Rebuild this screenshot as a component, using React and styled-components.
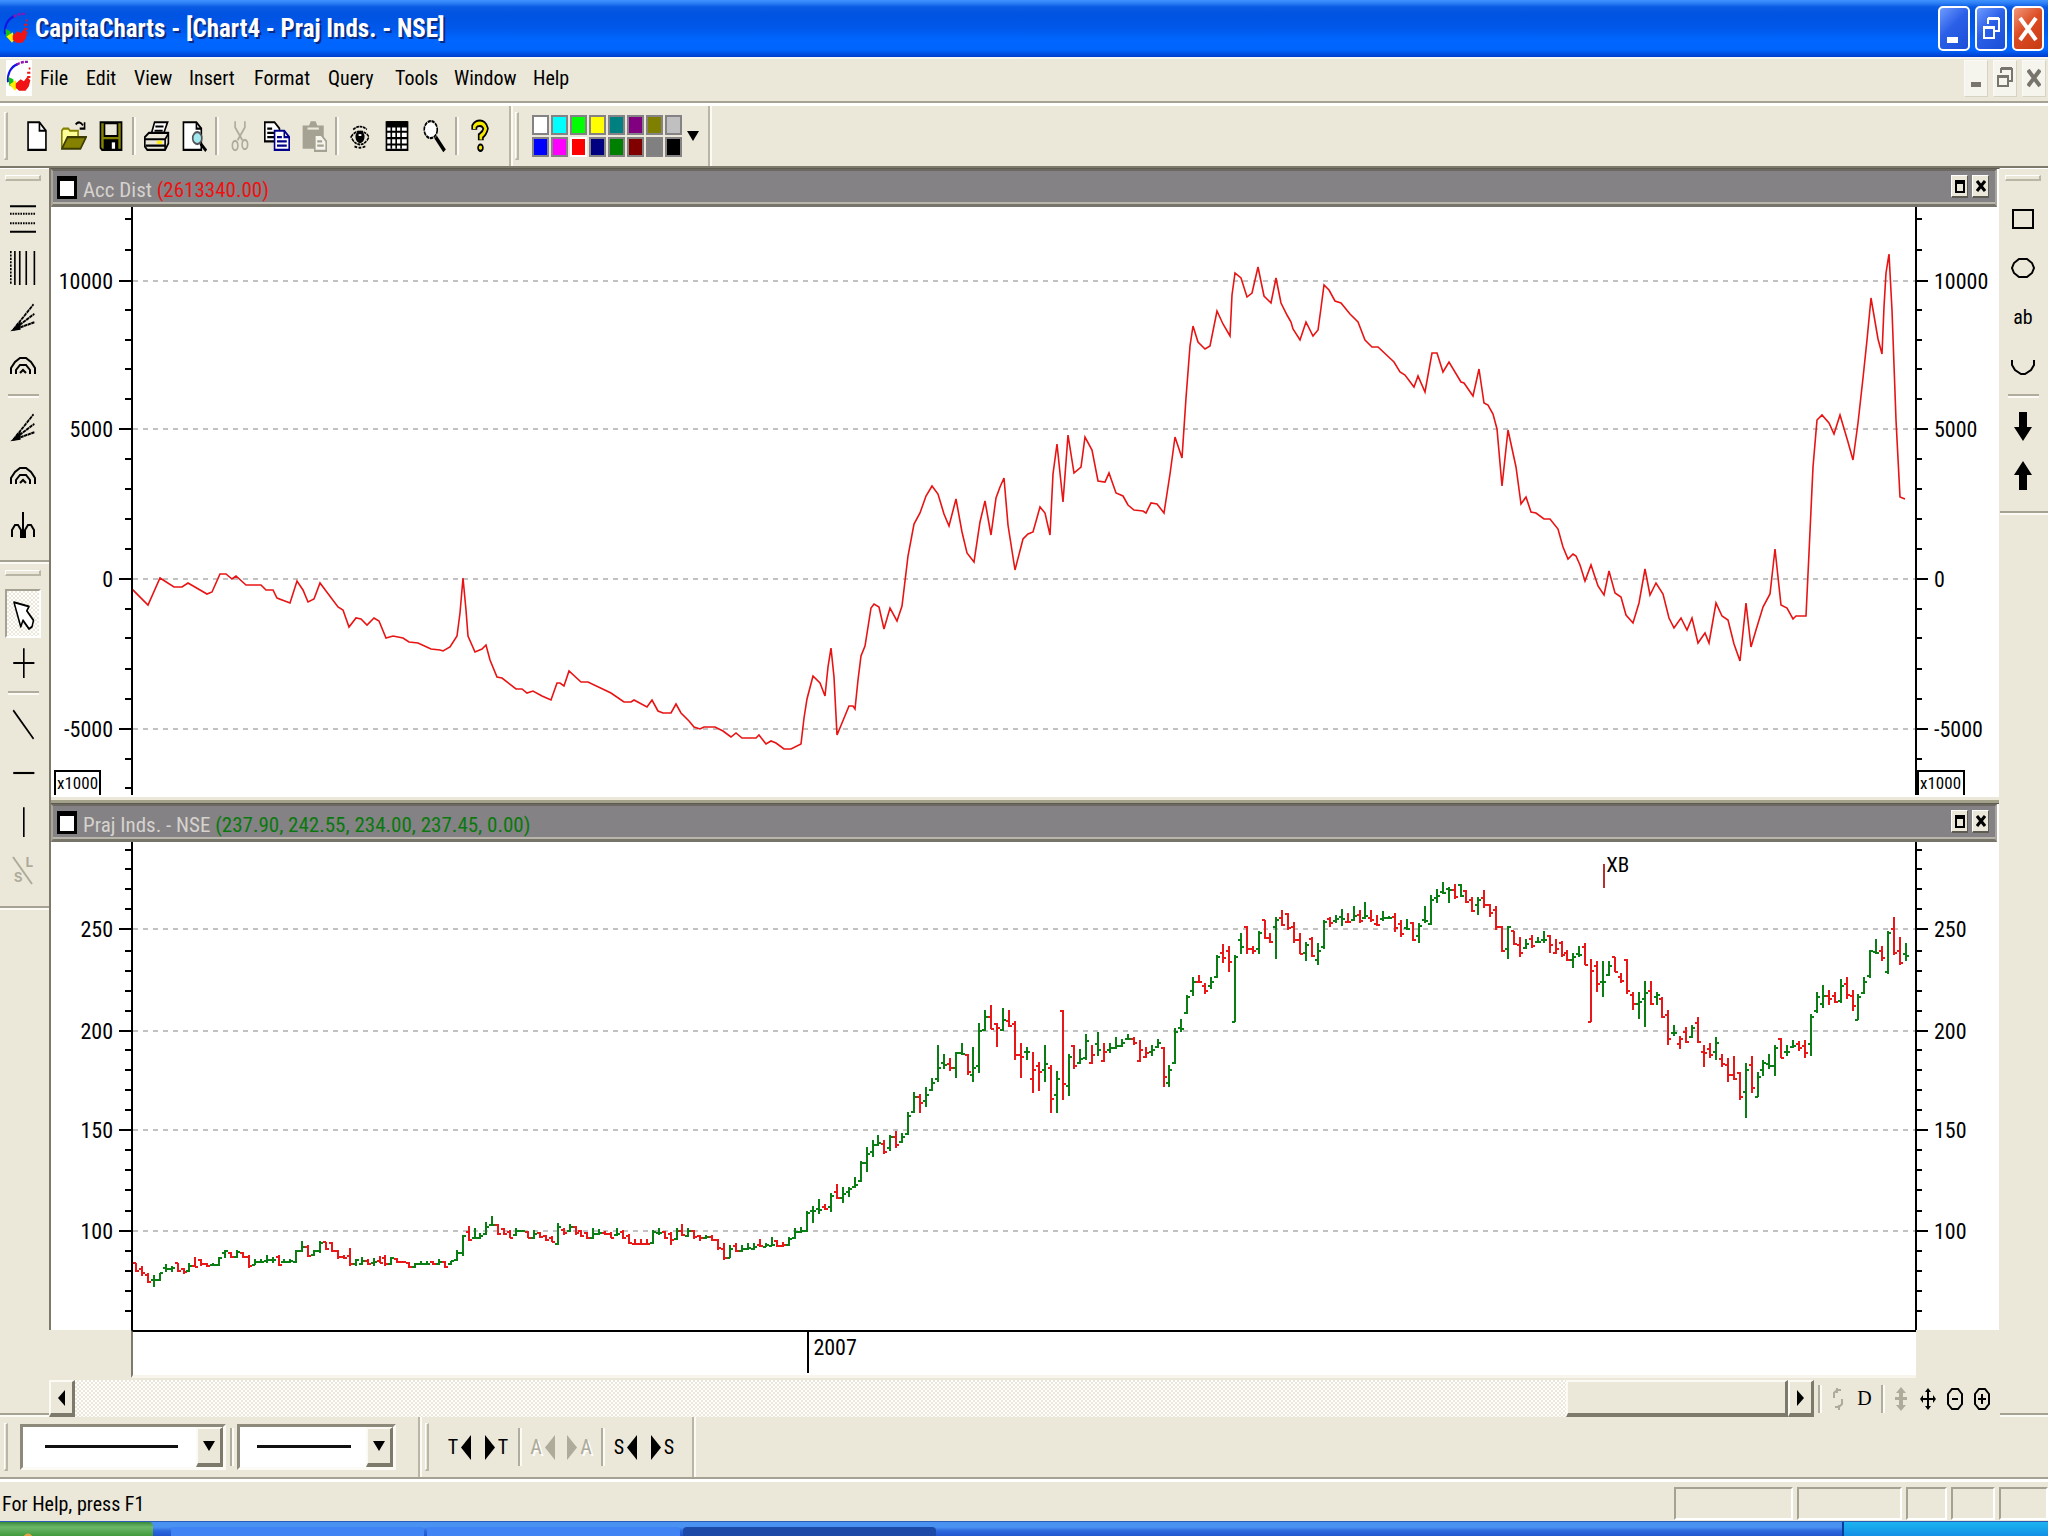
import styled, { createGlobalStyle, css } from "styled-components";

const face = "#ebe8d9";
const shade = "#a5a293";
const ink = "#000000";

const GlobalStyle = createGlobalStyle`
  * {
    box-sizing: border-box;
  }

  body {
    margin: 0;
    background: ${face};
    color: ${ink};
    font-family: "Roboto Condensed", "Liberation Sans", Arial, sans-serif;
    font-size: 20px;
  }

  button {
    margin: 0;
    padding: 0;
    border: 0;
    background: none;
    color: inherit;
    font: inherit;
  }

  svg {
    display: block;
    flex: none;
  }
`;

const Window = styled.div`
  display: flex;
  flex-direction: column;
  min-height: 100vh;
`;

/* ---------- title bar ---------- */

const TitleBar = styled.header`
  display: flex;
  align-items: center;
  height: 57px;
  padding: 0 4px 0 3px;
  background: linear-gradient(
    #3f93ff 0,
    #2e80f5 3px,
    #0a5be4 7px,
    #0053e1 14px,
    #0058ea 28px,
    #0066ff 40px,
    #0064fc 50px,
    #003ccc 57px
  );
`;

const WindowTitle = styled.h1`
  flex: 1;
  margin: 0 0 0 6px;
  color: #ffffff;
  font-size: 25px;
  font-weight: 700;
  line-height: 57px;
  text-shadow: 2px 2px 0 #0a2a80;
`;

const CaptionButtons = styled.div`
  display: flex;
  gap: 5px;
`;

const CaptionButton = styled.button`
  display: flex;
  align-items: center;
  justify-content: center;
  width: 32px;
  height: 45px;
  border: 2px solid #ffffff;
  border-radius: 5px;
  background: ${(props) =>
    props.$close
      ? "linear-gradient(135deg, #f0977a, #dc4c24 45%, #c63a12)"
      : "linear-gradient(135deg, #6f9bff, #2a5fe8 45%, #1c4fd8)"};
`;

/* ---------- menu ---------- */

const MenuBar = styled.nav`
  display: flex;
  align-items: center;
  height: 46px;
  padding: 0 2px 4px 6px;
  border-top: 2px solid #f6f5ee;
  border-bottom: 2px solid ${shade};
`;

const MenuLogo = styled.div`
  width: 26px;
  height: 36px;
  background: #ffffff;
`;

const MenuList = styled.ul`
  display: flex;
  flex: 1;
  gap: 20px;
  margin: 0 0 0 8px;
  padding: 0;
  list-style: none;
`;

const MenuItem = styled.button`
  width: ${(props) => props.$width}px;
  text-align: left;
  white-space: nowrap;
  line-height: 36px;
`;

const ChildButtons = styled.div`
  display: flex;
  gap: 5px;
`;

const ChildButton = styled.button`
  display: flex;
  align-items: center;
  justify-content: center;
  width: 24px;
  height: 37px;
  background: #f5f4ed;
  border: 1px solid #fbfaf6;
  border-right-color: #d6d3c4;
  border-bottom-color: #d6d3c4;
`;

/* ---------- toolbars ---------- */

const Toolbar = styled.div`
  display: flex;
  height: 63px;
  border-top: 3px solid #ffffff;
`;

const ToolGroup = styled.div`
  display: flex;
  align-items: center;
  padding: 0 ${(props) => props.$end || 0}px 0 ${(props) => props.$start || 0}px;
  border-right: 2px solid #b9b6a6;
  box-shadow: 2px 0 0 #fbfaf4;
`;

const Grip = styled.div`
  flex: none;
  background: ${face};
  border: 1px solid #ffffff;
  border-right: 2px solid #b9b6a6;
  border-bottom: 2px solid #b9b6a6;
  ${(props) =>
    props.$flat
      ? css`
          width: 36px;
          height: 6px;
          margin: 6px auto 0 5px;
        `
      : css`
          width: 4px;
          height: 48px;
        `}
`;

const ToolRow = styled.div`
  display: flex;
  align-items: center;
  margin-left: 10px;
`;

const ToolButton = styled.button`
  display: flex;
  align-items: center;
  justify-content: center;
  width: 37px;
  height: 48px;
`;

const PeriodButton = styled(ToolButton)`
  font-family: "Liberation Serif", serif;
`;

const Divider = styled.div`
  flex: none;
  background: #b0ad9e;
  ${(props) =>
    props.$flat
      ? css`
          width: 31px;
          height: 2px;
          margin: 4px 0 6px 8px;
          box-shadow: 0 2px 0 #fbfaf4;
        `
      : css`
          width: 2px;
          height: 38px;
          margin: 0 4px 0 3px;
          box-shadow: 2px 0 0 #fbfaf4;
        `}
`;

const Palette = styled.div`
  display: grid;
  grid-template-columns: repeat(8, 17px);
  grid-template-rows: repeat(2, 20px);
  gap: 2px;
  margin: 0 5px 0 13px;
`;

const Swatch = styled.button`
  background: ${(props) => props.$color};
  border: 2px solid #848284;
  ${(props) => props.$picked && "border-color: #ffffff;"}
`;

/* ---------- work area ---------- */

const WorkArea = styled.div`
  display: grid;
  grid-template-columns: 49px 1fr 48px;
  border-top: 2px solid #7d7a6c;
`;

const SideBar = styled.aside`
  display: flex;
  flex-direction: column;
  border-top: 1px solid #ffffff;
`;

const SideGroup = styled.div`
  padding-bottom: 11px;
  border-bottom: 2px solid ${shade};
  box-shadow: 0 2px 0 #fbfaf4;
  margin-bottom: 2px;

  > ${Grip} {
    margin-bottom: 13px;
  }
`;

const SideFill = styled.div`
  flex: 1;
  border-bottom: 2px solid ${shade};
  box-shadow: 0 2px 0 #fbfaf4;
  margin-bottom: 2px;
`;

const SideButton = styled.button`
  display: flex;
  align-items: center;
  justify-content: center;
  width: 36px;
  height: 49px;
  margin-left: 5px;
  ${(props) =>
    props.$pressed &&
    css`
      border: 2px solid #ffffff;
      border-top-color: ${shade};
      border-left-color: ${shade};
      background: repeating-conic-gradient(#ffffff 0 25%, ${face} 0 50%) 0 0 / 4px 4px;
    `}
`;

const Workspace = styled.main`
  min-width: 0;
`;

const Charts = styled.div`
  background: #ffffff;
  border-top: 1px solid #5d5b52;
  border-left: 2px solid #7d7a6c;
  border-right: 1px solid ${face};
`;

const PaneHeader = styled.div`
  display: flex;
  align-items: center;
  height: 38px;
  margin-right: 2px;
  padding: 0 6px 0 4px;
  background: #848284;
  border: 2px solid #a9a79b;
  border-top-color: #6c6a60;
  border-bottom: 3px solid #77756a;
  box-shadow: inset 0 -2px 0 #b8b5ab;
`;

const PaneTitle = styled.h2`
  flex: 1;
  margin: 0 0 0 6px;
  color: #d6d2ce;
  font-size: 21px;
  font-weight: 400;
  line-height: 30px;
  padding-top: 4px;
`;

const PaneValue = styled.span`
  color: ${(props) => props.$color};
`;

const PaneButton = styled.button`
  display: flex;
  align-items: center;
  justify-content: center;
  width: 17px;
  height: 23px;
  margin-left: 4px;
  margin-bottom: 2px;
  background: ${face};
  border: 1px solid #ffffff;
  border-right-color: #5d5b52;
  border-bottom: 2px solid #5d5b52;
`;

const PaneGap = styled.div`
  height: 9px;
  background: linear-gradient(#ffffff 0 2px, ${face} 2px 5px, #a3a18a 5px 8px, #5d5b52 8px);
`;

const PaneBody = styled.div`
  display: grid;
  grid-template-columns: 82px 1fr 84px;
`;

const Plot = styled.div`
  position: relative;
  height: ${(props) => props.$height}px;
  overflow: hidden;

  svg {
    width: 100%;
    height: 100%;
  }
`;

const EventMark = styled.div`
  position: absolute;
  top: 10px;
  left: 82.5%;
  padding-left: 3px;
  font-size: 21px;
  line-height: 26px;

  &::before {
    content: "";
    position: absolute;
    left: 0;
    top: 12px;
    width: 2px;
    height: 24px;
    background: #b8302c;
  }
`;

const DateStrip = styled.div`
  display: flex;
  height: 48px;
  margin: 0 84px 2px 82px;
  background: #ffffff;
  border-top: 2px solid ${ink};
  border-left: 2px solid #7d7a6c;
  border-bottom: 3px solid #f8f6ec;
`;

const DateMark = styled.div`
  height: 41px;
  padding-left: 4px;
  border-left: 2px solid ${ink};
  font-size: 22px;
  line-height: 31px;
`;

const ScrollRow = styled.div`
  display: flex;
  align-items: center;
  height: 37px;
`;

const ScrollBar = styled.div`
  display: flex;
  flex: 1;
  height: 37px;
  background: repeating-conic-gradient(#ffffff 0 25%, ${face} 0 50%) 0 0 / 4px 4px;
`;

const raised = css`
  background: ${face};
  border: 2px solid #fbfaf4;
  border-right: 3px solid #7d7a6c;
  border-bottom: 4px solid #7d7a6c;
`;

const ScrollButton = styled.button`
  display: flex;
  align-items: center;
  justify-content: center;
  width: 26px;
  height: 37px;
  ${raised}
`;

const ScrollThumb = styled.div`
  width: 222px;
  height: 37px;
  margin-left: auto;
  ${raised}
`;

const ViewTools = styled.div`
  display: flex;
  align-items: center;
  width: 186px;
  padding-left: 1px;

  ${ToolButton} {
    width: 27px;
    height: 36px;
  }

  ${Divider} {
    height: 28px;
  }
`;

/* ---------- bottom bars ---------- */

const BottomBar = styled.div`
  display: flex;
  height: 62px;
  border-bottom: 2px solid ${shade};
`;

const Combo = styled.label`
  position: relative;
  display: flex;
  width: ${(props) => props.$width}px;
  height: 46px;
  border: 3px solid #fbfaf4;
  border-top-color: #8d8a7c;
  border-left-color: #8d8a7c;
  background: #ffffff;

  select {
    flex: 1;
    appearance: none;
    border: 0;
    outline: 0;
    background: linear-gradient(#111111, #111111) no-repeat
      ${(props) => props.$inset}px 18px / ${(props) => props.$line}px 3px;
  }
`;

const ComboRow = styled.div`
  display: flex;
  align-items: center;
  gap: ${(props) => props.$gap || 0}px;
  margin-left: 12px;
`;

const ComboArrow = styled.span`
  display: flex;
  align-items: center;
  justify-content: center;
  width: 27px;
  pointer-events: none;
  ${raised}
`;

const StepButton = styled.button`
  display: flex;
  align-items: center;
  justify-content: center;
  gap: 3px;
  width: 37px;
  height: 48px;

  &:disabled {
    color: #aeab9b;
    text-shadow: 2px 2px 0 #ffffff;
  }
`;

const StatusBar = styled.footer`
  display: flex;
  height: 42px;
  padding-top: 5px;
  border-top: 3px solid #ffffff;
`;

const StatusText = styled.p`
  flex: 1;
  margin: 0 0 0 2px;
  line-height: 35px;
`;

const StatusCell = styled.div`
  width: ${(props) => props.$width}px;
  height: 33px;
  margin-right: 4px;
  border: 2px solid #ffffff;
  border-top-color: ${shade};
  border-left-color: ${shade};

  &:last-child {
    margin-right: 0;
  }
`;

const TaskBar = styled.div`
  display: flex;
  height: 15px;
  border-top: 1px solid #2a5db5;
  background: linear-gradient(#4a92f2 0 5px, #2a67dc 9px, #1f55d0);
`;

const StartButton = styled.button`
  width: 153px;
  margin-right: 18px;
  background: radial-gradient(circle at 28px 16px, #e8a040 0 4px, transparent 5px),
    linear-gradient(#3a8a3a, #6cb86a 5px, #3f9a3c);
  border-top-right-radius: 4px;
`;

const TaskButton = styled.button`
  width: 253px;
  height: 9px;
  margin: 5px 3px 0 0;
  border-radius: 4px 4px 0 0;
  background: ${(props) => (props.$active ? "#1a49a8" : "#3f83f5")};
`;

const Tray = styled.div`
  width: 206px;
  margin-left: auto;
  border-left: 2px solid #0a3c9c;
  background: linear-gradient(#1cb4f0, #1290e6);
`;

/* ---------- icons, drawn on a 16 x 16 pixel grid ---------- */

const Icon = ({ w = 26, h = 34, children }) => (
  <svg
    width={w}
    height={h}
    viewBox="0 0 16 16"
    preserveAspectRatio="none"
    fill="none"
    stroke="#000"
    strokeWidth="1"
    aria-hidden="true"
  >
    {children}
  </svg>
);

const Logo = ({ h = 34 }) => (
  <Icon h={h}>
    <path d="M1.2 10.5C0.6 6.5 3 3.2 7 2" stroke="#1414e6" strokeWidth="1.2" />
    <path d="M6.5 2.2C9 1 11 .8 13.5 .9" stroke="#8a14b4" strokeWidth="1.1" strokeDasharray="2 .7" />
    <path d="M1.5 8L4.5 9L5 13L2 12Z" fill="#12c21a" stroke="none" />
    <path d="M2.2 11.5L6 9.5L7 13L5.5 14.5Z" fill="#ffee00" stroke="none" />
    <path d="M6 11L9 9L11 10L13 8L15 9.5L14 12.5L12 14.5H8L6 13Z" fill="#f01414" stroke="none" />
    <path d="M13 6h2M14 4h1M13 8h2" stroke="#f01414" />
  </Icon>
);

const NewIcon = () => (
  <Icon>
    <path d="M2.5 1.5h7l4 4v9h-11z" fill="#fff" />
    <path d="M9.5 1.5v4h4" />
  </Icon>
);

const OpenIcon = () => (
  <Icon>
    <path d="M.5 13.5v-8l1-1h3l1 1h5v3" fill="#ffff9a" stroke="#848200" />
    <path d="M.5 14L4 8.5h11.5L12 14z" fill="#848200" stroke="#3c3b00" />
    <path d="M9 2.5Q11.5 .5 13.5 3M14.5 1.5v3h-3" />
  </Icon>
);

const SaveIcon = () => (
  <Icon>
    <path d="M1.5 1.5h13v13H2.5l-1-1z" fill="#848200" />
    <path d="M4 2h8v6H4z" fill="#ebe8d9" />
    <path d="M4 10h8v4H4z" fill="#000" />
    <path d="M8.5 11h2v3h-2z" fill="#fff" stroke="none" />
  </Icon>
);

const PrintIcon = () => (
  <Icon>
    <path d="M4.5 7L6.5 1.5h8L12 7" fill="#fff" />
    <path d="M7 3.5h5M6.5 5.5h5" />
    <path d="M.5 8.5L3 6.5h12v5L13 14.5H2L.5 13z" fill="#ebe8d9" />
    <path d="M.5 9.5h12.5v5M13 9.5L15 7M1 12.5h12" />
    <path d="M8 11h3" stroke="#ffee00" strokeWidth="1.5" />
  </Icon>
);

const PreviewIcon = () => (
  <Icon>
    <path d="M1.5 1.5h8l3 3v10h-11z" fill="#fff" />
    <path d="M9.5 1.5v3h3" />
    <circle cx="10" cy="9" r="2.8" fill="#9fe8f0" stroke="#555" />
    <path d="M12 11.5L15.5 15" strokeWidth="1.6" />
  </Icon>
);

const CutIcon = () => (
  <Icon>
    <g stroke="#aeab9b">
      <path d="M5 1v3l4.5 6M11 1v3L6.5 10" />
      <ellipse cx="5" cy="12.5" rx="1.7" ry="2.2" />
      <ellipse cx="11" cy="12" rx="1.7" ry="2.2" />
    </g>
  </Icon>
);

const CopyIcon = () => (
  <Icon>
    <path d="M.5 1.5h6l3 3v6h-9z" fill="#fff" />
    <path d="M2 4.5h3M2 6.5h5M2 8.5h5" />
    <path d="M6.5 5.5h6l3 3v6h-9z" fill="#fff" stroke="#00008a" />
    <path d="M12.5 5.5v3h3M8 8.5h3M8 10.5h6M8 12.5h6" stroke="#00008a" />
  </Icon>
);

const PasteIcon = () => (
  <Icon>
    <path d="M1 3h4l1-2h3l1 2h4v11H1z" fill="#a5a293" stroke="none" />
    <path d="M4 4.5h7" stroke="#ebe8d9" />
    <path d="M8.5 7.5h4l3 3v4.5h-7z" fill="#f5f4ed" stroke="#a5a293" />
    <path d="M10 10.5h3M10 12.5h4" stroke="#a5a293" />
  </Icon>
);

const EyeIcon = () => (
  <Icon w={22} h={30}>
    <path d="M3 4.5Q8 1.5 13 4.5M1.5 8.5Q4 5.5 8 5.5T14.5 8.5Q12 12.5 8 12.5T1.5 8.5Z" strokeDasharray="2 .5" />
    <circle cx="8" cy="8.5" r="2.8" fill="#000" />
    <path d="M7 7.5h2" stroke="#fff" />
    <path d="M4 13.5Q8 15 12 13.5" strokeDasharray="2 1" />
  </Icon>
);

const GridIcon = () => (
  <Icon>
    <path d="M1.5 1.5h13v13h-13z" fill="#fff" />
    <path d="M1.5 2.5h13" strokeWidth="3" />
    <path d="M4.5 2v12M7.5 2v12M10.5 2v12M1.5 6h13M1.5 9h13M1.5 12h13" />
  </Icon>
);

const ZoomIcon = () => (
  <Icon>
    <circle cx="6" cy="5" r="4" fill="#fff" strokeDasharray="2 .4" />
    <path d="M9 8.5L14.5 15" strokeWidth="2" />
  </Icon>
);

const HelpIcon = () => (
  <Icon>
    <path d="M4.5 5V3.5Q5.5 2 8 2T11.5 4.5Q11 6.5 8.5 8V10" strokeWidth="3.6" />
    <path d="M4.5 4.7V3.5Q5.5 2 8 2T11.5 4.5Q11 6.5 8.5 8V9.7" stroke="#f4e800" strokeWidth="1.6" />
    <circle cx="8.3" cy="13.5" r="1.5" fill="#f4e800" />
  </Icon>
);

const FanIcon = () => (
  <Icon>
    <path d="M2 14L14.5 2M2 14L15 6.5M2 14L15 10.5M2 14L5 11" strokeDasharray="2 .3" />
    <path d="M2 14l4-3v2.5z" fill="#000" />
  </Icon>
);

const ArcsIcon = () => (
  <svg width="28" height="20" fill="none" stroke="#000" strokeWidth="2" aria-hidden="true">
    <path d="M2 18V12L6 6L11 2H17L22 6L26 12V18" />
    <path d="M7 18V14L11 9H17L21 14V18" />
    <path d="M11 17L14 14L17 17" />
  </svg>
);

const sideIcons = {
  rows: (
    <Icon>
      <path d="M0 2h16M0 14h16" />
      <path d="M0 5.5h16M0 10h16" strokeDasharray="1 .6" />
    </Icon>
  ),
  columns: (
    <Icon>
      <path d="M.5 0v16" strokeDasharray="1 .6" />
      <path d="M3 0v16M6 0v16M10 0v16M15 0v16" />
    </Icon>
  ),
  fan: <FanIcon />,
  arcs: <ArcsIcon />,
  cycles: (
    <svg width="26" height="26" fill="none" stroke="#000" strokeWidth="2" aria-hidden="true">
      <path d="M2 25V18L5 13H8L11 18V23L13 25L15 23V18L18 13H21L24 18V25M13 0V25" />
      <path d="M11 20h4v5h-4z" fill="#000" />
    </svg>
  ),
  pointer: (
    <Icon w={24}>
      <path d="M2 2.5l10 2-1.5 2L15 11l-1 3-2 1-4-4-1.5 3z" fill="#fff" strokeLinejoin="round" />
    </Icon>
  ),
  cross: (
    <Icon>
      <path d="M8.5 1v14M2 8h13" />
    </Icon>
  ),
  slant: (
    <Icon>
      <path d="M2 1.5L14.5 15" />
    </Icon>
  ),
  horizontal: (
    <Icon>
      <path d="M2 8h13" />
    </Icon>
  ),
  vertical: (
    <Icon>
      <path d="M8.5 1v14" />
    </Icon>
  ),
  square: (
    <svg width="22" height="22" fill="none" stroke="#000" strokeWidth="2" aria-hidden="true">
      <path d="M1 2h20v18H1z" />
    </svg>
  ),
  circle: (
    <svg width="24" height="22" fill="none" stroke="#000" strokeWidth="2" aria-hidden="true">
      <path d="M8 2h8l5 4 2 5-2 5-5 4H8l-5-4-2-5 2-5z" />
    </svg>
  ),
  arc: (
    <svg width="24" height="22" fill="none" stroke="#000" strokeWidth="2" aria-hidden="true">
      <path d="M1 5v5l3 5 6 4h4l6-4 3-5V5" />
    </svg>
  ),
  down: (
    <svg width="18" height="30" aria-hidden="true">
      <path d="M5 0h8v15h5L9 29 0 15h5z" />
    </svg>
  ),
  up: (
    <svg width="18" height="30" aria-hidden="true">
      <path d="M5 29h8V14h5L9 0 0 14h5z" />
    </svg>
  ),
};

// Stop-loss tool: letters over a slanted line
const StopLossIcon = () => (
  <svg width="28" height="36" aria-hidden="true">
    <path d="M4 4L23 31" stroke="#aeab9b" strokeWidth="2" />
    <g fill="#aeab9b" fontSize="14" fontWeight="700" fontFamily="Liberation Mono, monospace">
      <text x="16" y="14">
        L
      </text>
      <text x="5" y="29">
        S
      </text>
    </g>
  </svg>
);

const ZoomCircle = ({ plus }) => (
  <svg width="18" height="24" fill="none" stroke="#000" strokeWidth="2" aria-hidden="true">
    <path d="M6 2h6l4 5v10l-4 5H6l-4-5V7z" />
    <path d={plus ? "M5 12h8M9 7v10" : "M6 12h6"} />
  </svg>
);

const Triangle = ({ left, w = 10, h = 25 }) => (
  <svg width={w} height={h} viewBox="0 0 8 16" preserveAspectRatio="none" fill="currentColor" aria-hidden="true">
    <path d={left ? "M8 0v16L0 8z" : "M0 0v16L8 8z"} />
  </svg>
);

const DropArrow = () => (
  <svg width="12" height="10" viewBox="0 0 12 10" aria-hidden="true">
    <path d="M0 0h12L6 10z" />
  </svg>
);

/* ---------- chart data ---------- */

const accDist =
  "132,589 148,605 160,578 174,587 182,587 188,583 207,594 212,592 220,574 226,574 232,579 236,576 246,585 261,585 " +
  "266,590 273,590 277,598 290,603 297,581 303,590 308,602 314,599 320,583 338,607 343,610 349,627 356,618 361,619 " +
  "367,625 374,618 379,621 386,638 393,636 403,638 409,642 418,643 431,649 440,650 443,651 450,647 457,636 460,613 " +
  "463,578 466,610 468,636 475,652 482,649 486,645 490,660 497,677 502,678 516,689 522,689 527,693 533,691 542,696 " +
  "551,700 557,683 560,683 564,686 569,671 581,682 588,682 611,693 624,702 631,702 634,700 647,707 652,700 658,711 " +
  "663,713 671,713 676,704 681,713 689,721 694,727 700,729 704,727 715,727 723,731 731,737 736,733 742,738 756,738 " +
  "759,735 766,744 771,741 776,743 784,749 791,749 801,744 804,718 807,699 813,676 820,683 825,696 828,667 831,648 " +
  "834,677 837,735 842,723 849,706 853,706 855,709 858,680 861,656 865,646 871,608 874,604 879,607 884,629 890,608 " +
  "897,621 902,606 908,556 914,524 920,513 926,496 932,486 938,494 944,514 949,526 956,499 962,532 967,553 974,562 " +
  "980,522 985,501 991,535 996,498 1000,487 1004,478 1008,525 1015,570 1023,539 1028,534 1033,532 1040,507 1045,513 " +
  "1050,535 1053,474 1057,444 1063,502 1068,435 1074,473 1081,467 1085,437 1092,450 1098,481 1105,482 1109,473 " +
  "1116,493 1123,496 1128,505 1134,510 1143,511 1146,513 1151,503 1157,504 1164,513 1170,474 1175,437 1182,458 " +
  "1186,398 1190,346 1193,326 1198,342 1205,349 1210,346 1217,311 1223,324 1230,336 1232,295 1235,273 1241,278 " +
  "1247,297 1252,293 1258,267 1264,296 1271,303 1276,278 1281,303 1287,315 1291,322 1293,329 1300,340 1306,322 " +
  "1313,336 1318,330 1321,308 1324,285 1329,290 1335,301 1341,303 1350,314 1358,322 1365,340 1372,347 1378,347 " +
  "1394,362 1400,372 1405,375 1414,387 1418,376 1425,392 1432,353 1437,353 1443,372 1449,362 1461,382 1464,383 " +
  "1473,396 1479,369 1484,403 1488,405 1493,414 1497,429 1502,486 1508,430 1516,467 1521,504 1526,497 1531,512 " +
  "1536,513 1544,519 1550,519 1558,529 1563,547 1568,559 1573,554 1576,556 1580,565 1585,581 1591,565 1598,586 " +
  "1604,595 1609,571 1615,593 1621,597 1626,615 1633,623 1639,603 1645,569 1650,595 1656,583 1663,594 1669,618 " +
  "1674,628 1681,618 1687,630 1692,618 1698,643 1705,633 1709,643 1716,603 1722,616 1728,620 1734,644 1740,661 " +
  "1746,603 1751,647 1756,630 1763,607 1770,594 1775,549 1781,605 1787,608 1793,619 1796,616 1806,616 1809,553 " +
  "1813,467 1817,420 1822,415 1829,423 1834,434 1840,415 1848,442 1853,460 1858,423 1863,378 1867,340 1871,298 " +
  "1878,339 1882,354 1884,307 1886,273 1889,254 1892,310 1896,420 1900,497 1905,499";

// One bar per session: direction, then high, low, open and close
const sessions = (
  "r423,432,423,431 r426,436,429,433 r433,443,435,442 g435,447,440,440 g433,441,440,433 g424,432,428,429 " +
  "g426,432,429,428 r423,432,423,431 r428,434,429,432 g423,432,431,426 r417,427,426,427 r419,426,420,424 " +
  "r423,427,424,426 g423,426,425,425 g417,426,425,418 g410,418,413,411 r412,418,413,417 g410,418,417,412 " +
  "r412,418,413,417 r415,428,417,426 g419,425,425,422 g419,423,422,422 g415,423,421,420 g417,423,420,420 " +
  "r415,426,417,425 g419,423,422,422 g419,423,422,421 g410,423,422,411 g401,412,411,407 r405,417,407,416 " +
  "g410,416,415,411 g401,413,411,403 r402,410,402,409 r402,412,403,411 r410,419,411,417 r415,419,417,418 " +
  "r408,426,416,424 g419,426,424,420 g417,425,424,421 r419,425,421,424 g418,426,423,422 r416,423,421,423 " +
  "r415,426,418,424 g417,425,424,418 r418,423,419,422 r421,423,422,422 r422,428,423,427 g423,428,427,424 " +
  "g421,425,424,424 g421,425,424,424 r421,425,422,424 g419,425,424,422 r421,428,422,427 g421,425,424,421 " +
  "g410,421,420,413 g395,416,413,396 r386,401,392,400 g388,399,398,398 g393,399,398,396 g382,395,394,387 " +
  "g376,386,385,385 r384,395,385,394 r388,395,389,394 r390,398,392,398 g388,396,395,391 g391,392,391,391 " +
  "r391,398,392,398 g390,399,398,394 r392,398,393,397 r395,401,396,400 r396,402,398,402 g383,405,404,387 " +
  "r388,395,390,393 g384,392,391,387 r386,395,387,393 r390,397,391,396 r392,399,393,398 g388,399,398,394 " +
  "g389,395,394,393 r391,395,393,394 r392,398,394,398 g388,396,395,394 r390,399,392,398 r394,404,396,403 " +
  "r399,405,404,404 r399,405,404,404 r399,405,404,404 g390,404,403,392 g388,395,393,393 r391,399,392,398 " +
  "r392,405,394,400 g388,400,399,391 r384,396,391,395 g388,397,396,391 r390,399,391,397 r395,401,396,398 " +
  "g395,399,398,397 r395,401,397,400 r399,410,400,408 r403,420,409,418 g405,418,418,409 r403,412,406,411 " +
  "g405,412,411,409 g403,410,409,408 g403,410,409,407 r399,407,405,406 g403,407,407,405 g397,406,406,405 " +
  "r400,407,401,406 r402,407,406,405 g397,406,405,399 g388,399,398,392 g387,393,392,391 " +
  "g371,392,391,373 g366,383,371,371 g359,374,369,370 r364,370,367,369 g353,372,367,356 r344,359,352,358 " +
  "g347,363,358,354 g347,357,352,349 g337,348,347,345 g321,342,341,323 g307,332,323,314 g300,317,312,305 " +
  "g295,306,305,303 r300,314,304,312 g295,311,308,297 r291,308,297,305 g293,303,302,297 g272,295,294,276 " +
  "g252,273,272,257 r254,273,257,263 g247,267,261,255 g238,251,250,243 g205,242,239,228 g214,229,223,225 " +
  "r218,231,224,228 g212,238,228,213 g203,215,213,214 r214,235,215,232 g207,242,235,228 g183,233,226,191 " +
  "g170,191,190,177 r165,189,177,189 r183,207,184,188 g168,191,190,180 r170,187,181,186 r181,220,184,215 " +
  "r203,238,215,217 g207,220,212,212 r212,253,239,230 r222,251,226,232 g205,242,230,224 r225,273,228,259 " +
  "g231,273,255,239 r170,260,171,244 g214,256,246,217 r205,229,206,226 g209,224,223,219 g194,220,218,201 " +
  "r205,224,223,215 g192,216,204,210 r203,222,221,212 g203,213,210,208 g197,209,208,206 g199,207,206,203 " +
  "g194,200,199,199 r197,205,199,203 r200,222,221,210 r207,218,217,213 g205,216,212,210 g199,208,207,203 " +
  "r207,247,208,237 g225,247,243,230 g188,224,223,192 g179,192,188,189 g155,174,173,157 g137,156,151,142 " +
  "r135,143,142,142 r143,154,146,151 g137,149,146,142 g115,138,137,117 r104,123,113,118 r106,132,111,122 " +
  "g115,182,182,117 g93,114,100,107 r86,114,87,109 r106,114,109,111 g91,114,109,93 r80,99,80,98 " +
  "r93,103,98,102 g77,119,87,80 r70,86,78,85 r73,90,74,88 r82,103,87,100 r93,114,100,114 " +
  "g102,121,113,105 r97,117,99,116 g103,125,120,111 g80,109,107,82 r77,87,79,83 g75,83,81,79 " +
  "g69,86,77,79 r73,83,82,82 g66,81,80,76 r70,83,75,81 g62,79,78,76 r70,82,78,80 r75,86,84,85 " +
  "g71,81,79,78 g76,79,78,78 r73,92,77,88 r80,97,84,94 g79,90,88,89 r82,101,83,100 g83,103,96,86 " +
  "g66,83,80,81 g55,85,84,60 g49,63,58,56 g42,54,52,53 g47,63,49,50 r44,59,50,57 g44,57,45,56 " +
  "r50,63,51,62 r57,72,60,71 g57,75,65,60 r50,68,58,65 r64,77,65,73 r66,90,70,87 r86,112,87,111 " +
  "g86,119,109,87 r91,105,91,104 r97,117,105,113 g99,109,108,104 r95,108,99,106 g97,103,102,102 " +
  "g91,103,100,100 r95,113,96,105 r99,114,113,109 r101,117,103,115 r110,121,113,120 g113,128,120,117 " +
  "g106,117,114,115 r103,125,107,125 r119,182,182,131 r121,152,126,144 g121,157,142,142 g121,136,135,126 " +
  "r117,132,117,132 r133,143,137,141 r119,154,120,151 r152,170,155,164 g152,179,164,162 g141,187,159,153 " +
  "r141,165,151,164 g152,165,157,155 r157,178,159,177 r170,205,175,199 g185,196,193,193 r196,209,204,199 " +
  "r187,203,192,202 g185,198,197,188 r177,203,183,202 r205,227,212,213 r203,218,209,215 g197,220,212,203 " +
  "r214,227,219,224 r218,242,225,235 r216,240,235,239 r232,260,233,257 g223,278,252,230 r216,253,225,248 " +
  "g232,257,257,237 g220,236,230,223 g214,229,224,226 g205,236,226,208 r198,218,199,218 g205,216,212,212 " +
  "g200,208,207,206 r201,211,204,208 r200,218,206,213 g174,216,204,177 g152,173,171,157 g145,168,164,156 " +
  "r150,165,156,159 r152,163,156,162 g139,163,161,146 r137,159,144,155 r150,171,156,166 g154,180,180,157 " +
  "g137,154,153,142 g110,138,136,111 g99,114,112,113 r106,121,111,118 g91,134,132,93 r77,115,89,113 " +
  "r97,125,111,123 g103,121,114,116"
)
  .split(" ")
  .map((bar) => ({
    color: bar[0] === "g" ? "#0a7d14" : "#e81818",
    values: bar.slice(1).split(",").map(Number),
  }));

const sessionWidth = 1770 / (sessions.length - 1);

const upperAxis = {
  height: 588,
  labels: [
    ["10000", 74],
    ["5000", 222],
    ["0", 372],
    ["-5000", 522],
  ],
  minor: [12, 43, 103, 133, 162, 192, 252, 282, 312, 342, 402, 431, 462, 492, 552, 581],
};

const lowerAxis = {
  height: 488,
  labels: [
    ["250", 87],
    ["200", 189],
    ["150", 288],
    ["100", 389],
  ],
  minor: [8, 27, 47, 67, 109, 129, 149, 169, 208, 228, 248, 268, 308, 328, 348, 369, 409, 429, 449, 469],
};

const Axis = ({ axis, side, scale }) => {
  const left = side === "left";
  return (
    <svg width={left ? 82 : 84} height={axis.height} stroke="#000" strokeWidth="2">
      <path d={`M${left ? 81 : 1} 0V${axis.height}`} />
      {axis.minor.map((y) => (
        <path key={y} d={left ? `M74 ${y}H81` : `M1 ${y}H7`} />
      ))}
      {axis.labels.map(([label, y]) => (
        <g key={label}>
          <path d={left ? `M68 ${y}H81` : `M1 ${y}H13`} />
          <text
            x={left ? 62 : 19}
            y={y + 8}
            textAnchor={left ? "end" : "start"}
            fontSize="22"
            fill="#000"
            stroke="none"
          >
            {label}
          </text>
        </g>
      ))}
      {scale && (
        <g>
          <path d={left ? "M4 588V564H49V588" : "M3 588V564H49V588"} fill="#fff" />
          <text x={left ? 6 : 5} y="582" fontSize="17" fill="#000" stroke="none">
            {scale}
          </text>
        </g>
      )}
    </svg>
  );
};

const GridLines = ({ axis, x, width, top }) =>
  axis.labels.map(([label, y]) => (
    <path
      key={label}
      d={`M${x} ${top + y}h${width}`}
      stroke="#c2c2c2"
      strokeWidth="2"
      strokeDasharray="5 5"
    />
  ));

const AccDistPlot = () => (
  <Plot $height={588}>
    <svg viewBox="133 207 1782 588" preserveAspectRatio="none" fill="none">
      <GridLines axis={upperAxis} x={133} width={1782} top={207} />
      <polyline points={accDist} stroke="#e81414" strokeWidth="1.6" />
    </svg>
  </Plot>
);

const PricePlot = () => (
  <Plot $height={488}>
    <svg viewBox="0 2 1782 488" preserveAspectRatio="none" fill="none">
      <GridLines axis={lowerAxis} x={0} width={1782} top={2} />
      {sessions.map(({ color, values: [high, low, open, close] }, i) => {
        const x = Math.round(3 + i * sessionWidth);
        return (
          <path
            key={i}
            d={`M${x} ${high}V${low}M${x - 3} ${open}H${x}M${x} ${close}H${x + 3}`}
            stroke={color}
            strokeWidth="2"
          />
        );
      })}
    </svg>
    <EventMark>XB</EventMark>
  </Plot>
);

const Pane = ({ name, value, color, children }) => (
  <section>
    <PaneHeader>
      <svg width="20" height="23" aria-hidden="true">
        <path d="M0 0h20v23H0z" />
        <path d="M3 5h14v15H3z" fill="#fff" />
      </svg>
      <PaneTitle>
        {name} <PaneValue $color={color}>{value}</PaneValue>
      </PaneTitle>
      <PaneButton aria-label={`Maximise ${name}`}>
        <svg width="10" height="13" fill="none" stroke="#000" aria-hidden="true">
          <path d="M1 2h8v10H1z" strokeWidth="2" />
          <path d="M0 2h10" strokeWidth="4" />
        </svg>
      </PaneButton>
      <PaneButton aria-label={`Close ${name}`}>
        <svg width="10" height="12" stroke="#000" strokeWidth="3" aria-hidden="true">
          <path d="M1 1l8 10M9 1L1 11" />
        </svg>
      </PaneButton>
    </PaneHeader>
    {children}
  </section>
);

const menus = [
  ["File", 26],
  ["Edit", 28],
  ["View", 35],
  ["Insert", 45],
  ["Format", 54],
  ["Query", 47],
  ["Tools", 39],
  ["Window", 59],
  ["Help", 40],
];

const standardTools = [
  ["New", NewIcon],
  ["Open", OpenIcon],
  ["Save", SaveIcon],
  null,
  ["Print", PrintIcon],
  ["Print preview", PreviewIcon],
  null,
  ["Cut", CutIcon],
  ["Copy", CopyIcon],
  ["Paste", PasteIcon],
  null,
  ["Show", EyeIcon],
  ["Data", GridIcon],
  ["Zoom", ZoomIcon],
  null,
  ["Help", HelpIcon],
];

const colors = [
  "#ffffff", "#00ffff", "#00ff00", "#ffff00", "#008080", "#800080", "#808000", "#c0c0c0",
  "#0000ff", "#ff00ff", "#ff0000", "#000080", "#008000", "#800000", "#808080", "#000000",
];

const SideTools = ({ names }) =>
  names.map((name, i) =>
    name === "-" ? (
      <Divider key={i} $flat />
    ) : (
      <SideButton key={i} aria-label={name} $pressed={name === "pointer"}>
        {name === "ab" && "ab"}
        {name === "stop loss" && <StopLossIcon />}
        {sideIcons[name]}
      </SideButton>
    )
  );

const StepButtons = ({ letter, disabled }) => (
  <>
    <StepButton disabled={disabled} aria-label={`${letter} back`}>
      {letter}
      <Triangle left />
    </StepButton>
    <StepButton disabled={disabled} aria-label={`${letter} forward`}>
      <Triangle />
      {letter}
    </StepButton>
  </>
);

const LineCombo = ({ label, ...size }) => (
  <Combo {...size}>
    <select aria-label={label}>
      <option aria-label="Solid" />
    </select>
    <ComboArrow>
      <DropArrow />
    </ComboArrow>
  </Combo>
);

const App = () => (
  <Window>
    <GlobalStyle />

    <TitleBar>
      <Logo />
      <WindowTitle>CapitaCharts - [Chart4 - Praj Inds. - NSE]</WindowTitle>
      <CaptionButtons>
        <CaptionButton aria-label="Minimise">
          <svg width="20" height="30">
            <path d="M3 23h11v6H3z" fill="#fff" />
          </svg>
        </CaptionButton>
        <CaptionButton aria-label="Restore">
          <svg width="18" height="26" fill="none" stroke="#fff" strokeWidth="2">
            <path d="M6 8V3h11v12h-4M6 2h11M2 11h10v11H2zM2 12h10" />
          </svg>
        </CaptionButton>
        <CaptionButton $close aria-label="Close">
          <svg width="20" height="26" stroke="#fff" strokeWidth="4">
            <path d="M2 2l16 22M18 2L2 24" />
          </svg>
        </CaptionButton>
      </CaptionButtons>
    </TitleBar>

    <MenuBar>
      <MenuLogo>
        <Logo />
      </MenuLogo>
      <MenuList>
        {menus.map(([label, width]) => (
          <li key={label}>
            <MenuItem $width={width}>{label}</MenuItem>
          </li>
        ))}
      </MenuList>
      <ChildButtons>
        <ChildButton aria-label="Minimise chart">
          <svg width="14" height="22">
            <path d="M2 15h10v5H2z" fill="#77756c" />
          </svg>
        </ChildButton>
        <ChildButton aria-label="Restore chart">
          <svg width="16" height="24" fill="none" stroke="#77756c" strokeWidth="2">
            <path d="M4 7V3h11v12h-3M4 2h11M1 10h10v10H1zM1 11h10" />
          </svg>
        </ChildButton>
        <ChildButton aria-label="Close chart">
          <svg width="14" height="20" stroke="#77756c" strokeWidth="4">
            <path d="M1 2l12 16M13 2L1 18" />
          </svg>
        </ChildButton>
      </ChildButtons>
    </MenuBar>

    <Toolbar>
      <ToolGroup $start={4} $end={11}>
        <Grip />
        <ToolRow>
          {standardTools.map((tool, i) => {
            if (!tool) return <Divider key={i} />;
            const [label, Glyph] = tool;
            return (
              <ToolButton key={i} aria-label={label}>
                <Glyph />
              </ToolButton>
            );
          })}
        </ToolRow>
      </ToolGroup>
      <ToolGroup $start={4} $end={9}>
        <Grip />
        <Palette>
          {colors.map((color) => (
            <Swatch key={color} $color={color} $picked={color === "#ff0000"} aria-label={color} />
          ))}
        </Palette>
        <DropArrow />
      </ToolGroup>
    </Toolbar>

    <WorkArea>
      <SideBar>
        <SideGroup>
          <Grip $flat />
          <SideTools names={["rows", "columns", "fan", "arcs", "-", "fan", "arcs", "cycles"]} />
        </SideGroup>
        <SideGroup>
          <Grip $flat />
          <SideTools
            names={["pointer", "cross", "-", "slant", "horizontal", "vertical", "stop loss"]}
          />
        </SideGroup>
        <SideFill />
      </SideBar>

      <Workspace>
        <Charts>
          <Pane name="Acc Dist" value="(2613340.00)" color="#f01010">
            <PaneBody>
              <Axis axis={upperAxis} side="left" scale="x1000" />
              <AccDistPlot />
              <Axis axis={upperAxis} side="right" scale="x1000" />
            </PaneBody>
          </Pane>
          <PaneGap />
          <Pane
            name="Praj Inds. - NSE"
            value="(237.90, 242.55, 234.00, 237.45, 0.00)"
            color="#0a780e"
          >
            <PaneBody>
              <Axis axis={lowerAxis} side="left" />
              <PricePlot />
              <Axis axis={lowerAxis} side="right" />
            </PaneBody>
          </Pane>
        </Charts>
        <DateStrip>
          <div style={{ flexBasis: `${(674 / 1782) * 100}%` }} />
          <DateMark>2007</DateMark>
        </DateStrip>
        <ScrollRow>
          <ScrollBar>
            <ScrollButton aria-label="Scroll left">
              <Triangle left w={7} h={16} />
            </ScrollButton>
            <ScrollThumb />
            <ScrollButton aria-label="Scroll right">
              <Triangle w={7} h={16} />
            </ScrollButton>
          </ScrollBar>
          <ViewTools>
            <Divider />
            <ToolButton aria-label="Refresh">
              <svg width="12" height="24" fill="none" stroke="#aeab9b" strokeWidth="2">
                <path d="M9 3H5L2 6v5M5 1v5M3 20h4l3-3v-5M7 18v5" />
              </svg>
            </ToolButton>
            <PeriodButton>D</PeriodButton>
            <Divider />
            <ToolButton aria-label="Fit height">
              <svg width="12" height="24" fill="#aeab9b">
                <path d="M6 0l5 6H8v4h4v3H8v5h3l-5 6-5-6h3v-5H0v-3h4V6H1z" />
              </svg>
            </ToolButton>
            <ToolButton aria-label="Pan">
              <svg width="16" height="22">
                <path d="M8 0l3 4H9v6h4V7l3 4-3 4v-3H9v6h2l-3 4-3-4h2v-6H3v3l-3-4 3-4v3h4V4H5z" />
              </svg>
            </ToolButton>
            <ToolButton aria-label="Zoom out">
              <ZoomCircle />
            </ToolButton>
            <ToolButton aria-label="Zoom in">
              <ZoomCircle plus />
            </ToolButton>
          </ViewTools>
        </ScrollRow>
      </Workspace>

      <SideBar>
        <SideGroup>
          <Grip $flat />
          <SideTools names={["square", "circle", "ab", "arc", "-", "down", "up"]} />
        </SideGroup>
        <SideFill />
      </SideBar>
    </WorkArea>

    <BottomBar>
      <ToolGroup $start={4} $end={22}>
        <Grip />
        <ComboRow $gap={1}>
          <LineCombo label="Line style" $width={206} $line={133} $inset={22} />
          <Divider />
          <LineCombo label="Line width" $width={159} $line={94} $inset={17} />
        </ComboRow>
      </ToolGroup>
      <ToolGroup $start={5} $end={11}>
        <Grip />
        <ComboRow>
          <StepButtons letter="T" />
          <Divider />
          <StepButtons letter="A" disabled />
          <Divider />
          <StepButtons letter="S" />
        </ComboRow>
      </ToolGroup>
    </BottomBar>

    <StatusBar>
      <StatusText>For Help, press F1</StatusText>
      <StatusCell $width={119} />
      <StatusCell $width={105} />
      <StatusCell $width={41} />
      <StatusCell $width={44} />
      <StatusCell $width={49} />
    </StatusBar>

    <TaskBar>
      <StartButton aria-label="Start" />
      <TaskButton aria-label="Task 1" />
      <TaskButton aria-label="Task 2" />
      <TaskButton aria-label="CapitaCharts" $active />
      <Tray />
    </TaskBar>
  </Window>
);

export default App;
